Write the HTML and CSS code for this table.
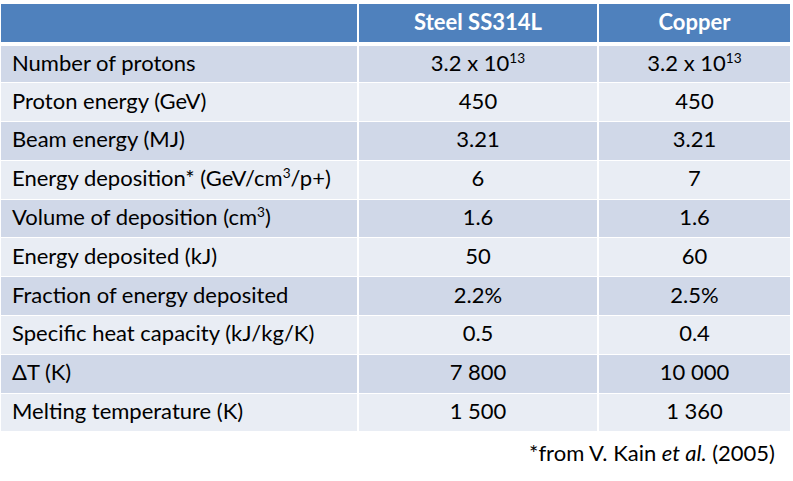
FILE: index.html
```html
<!DOCTYPE html>
<html>
<head>
<meta charset="utf-8">
<link rel="stylesheet" href="styles.css">
</head>
<body>
<div class="page">
  <table class="data">
    <thead>
      <tr>
        <th class="label"></th>
        <th>Steel SS314L</th>
        <th>Copper</th>
      </tr>
    </thead>
    <tbody>
      <tr class="odd"><td class="label">Number of protons</td><td>3.2 x 10<sup>13</sup></td><td>3.2 x 10<sup>13</sup></td></tr>
      <tr class="even"><td class="label">Proton energy (GeV)</td><td>450</td><td>450</td></tr>
      <tr class="odd"><td class="label">Beam energy (MJ)</td><td>3.21</td><td>3.21</td></tr>
      <tr class="even"><td class="label">Energy deposition* (GeV/cm<sup>3</sup>/p+)</td><td>6</td><td>7</td></tr>
      <tr class="odd"><td class="label">Volume of deposition (cm<sup>3</sup>)</td><td>1.6</td><td>1.6</td></tr>
      <tr class="even"><td class="label">Energy deposited (kJ)</td><td>50</td><td>60</td></tr>
      <tr class="odd"><td class="label">Fraction of energy deposited</td><td>2.2%</td><td>2.5%</td></tr>
      <tr class="even"><td class="label">Specific heat capacity (kJ/kg/K)</td><td>0.5</td><td>0.4</td></tr>
      <tr class="odd"><td class="label">ΔT (K)</td><td>7 800</td><td>10 000</td></tr>
      <tr class="even"><td class="label">Melting temperature (K)</td><td>1 500</td><td>1 360</td></tr>
    </tbody>
  </table>
  <p class="note">*from V. Kain <i>et al.</i> (2005)</p>
</div>
</body>
</html>
```

FILE: styles.css
```css
html, body {
  margin: 0;
  padding: 0;
  background: #ffffff;
}
body {
  font-family: Lato, "Open Sans", sans-serif;
  color: #000000;
}
.page {
  padding: 4px 3px 0 1px;
}
.data {
  width: 789px;
  border-collapse: collapse;
  table-layout: fixed;
}
.data th, .data td {
  box-sizing: border-box;
  padding: 0;
  text-align: center;
  vertical-align: middle;
  font-size: 22px;
  line-height: 24px;
  border-left: 2px solid #ffffff;
  border-right: 2px solid #ffffff;
}
.data th:first-child, .data td:first-child {
  border-left: none;
}
.data th:last-child, .data td:last-child {
  border-right: none;
}
.data th {
  background: #4f81bd;
  color: #ffffff;
  font-weight: bold;
  height: 40px;
  padding-bottom: 2px;
  border-bottom: 4px solid #ffffff;
}
.data th.label { width: 357px; }
.data th:nth-child(2) { width: 240px; }
.data td {
  height: 38.8px;
  padding-bottom: 3px;
  border-bottom: 1px solid #ffffff;
}
.data td.label {
  text-align: left;
  padding-left: 11px;
}
.odd td { background: #d0d8e8; }
.even td { background: #e9edf4; }
sup {
  font-size: 0.62em;
  line-height: 0;
  vertical-align: 0.6em;
}
.note {
  margin: 8px 15px 0 0;
  text-align: right;
  font-size: 22px;
  line-height: 26px;
}
```
